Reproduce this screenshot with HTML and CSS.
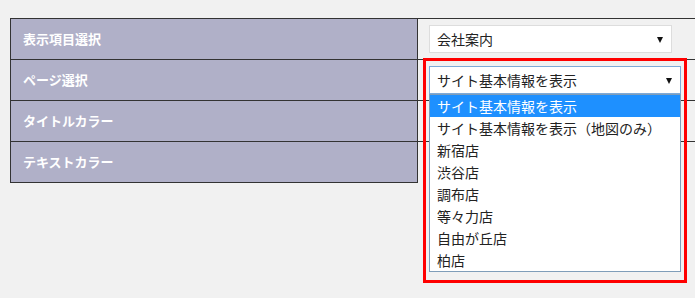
FILE: index.html
```html
<!DOCTYPE html>
<html lang="ja">
<head>
  <meta charset="UTF-8" />
  <title>ページ設定</title>
  <link rel="stylesheet" href="styles.css">
</head>
<body>

  <div class="form">
    <div class="row">
      <div class="label">表示項目選択</div>
      <div class="field">
        <div class="select">会社案内<span class="arrow"></span></div>
      </div>
    </div>
    <div class="row">
      <div class="label">ページ選択</div>
      <div class="field">
        <div class="select focused">サイト基本情報を表示<span class="arrow"></span></div>
      </div>
    </div>
    <div class="row">
      <div class="label">タイトルカラー</div>
      <div class="field"></div>
    </div>
    <div class="row last">
      <div class="label">テキストカラー</div>
      <div class="field"></div>
    </div>
  </div>

  <ul class="options">
    <li class="active">サイト基本情報を表示</li>
    <li>サイト基本情報を表示（地図のみ）</li>
    <li>新宿店</li>
    <li>渋谷店</li>
    <li>調布店</li>
    <li>等々力店</li>
    <li>自由が丘店</li>
    <li>柏店</li>
  </ul>

  <div class="highlight"></div>

</body>
</html>
```

FILE: styles.css
```css
html, body { margin:0; padding:0; background:#f1f1f1; overflow:hidden; }
body { font-family:"Noto Sans CJK JP", "Noto Sans", sans-serif; color:#222; padding:18px 0 0 10px; }

.form { width:685px; }
.row { display:flex; border-top:1px solid #333; }
.label { width:394px; height:40px; line-height:40px; padding-left:12px; background:#b0b0c8; color:#fff; font-size:13px; font-weight:bold; border-left:1px solid #333; border-right:1px solid #333; }
.last .label { border-bottom:1px solid #333; }
.field { flex:1; padding:6px 0 0 11px; }

.select { position:relative; width:241px; height:26px; line-height:26px; padding-left:7px; box-sizing:border-box; width:243px; height:28px; background:#fff; border:1px solid #ddd; font-size:14px; }
.select.focused { width:252px; border-color:#7eaad8; }
.arrow { position:absolute; right:8px; top:11px; border-left:3px solid transparent; border-right:3px solid transparent; border-top:6px solid #111; }

.options { position:absolute; left:429px; top:94px; width:252px; box-sizing:border-box; margin:0; padding:0; list-style:none; background:#fff; border:1px solid #7f9db9; font-size:14px; }
.options li { height:22px; line-height:22px; padding-left:7px; }
.options li.active { background:#1e90ff; color:#fff; }

.highlight { position:absolute; left:423px; top:58px; width:264px; height:225px; box-sizing:border-box; border:3px solid #f00; }
```
